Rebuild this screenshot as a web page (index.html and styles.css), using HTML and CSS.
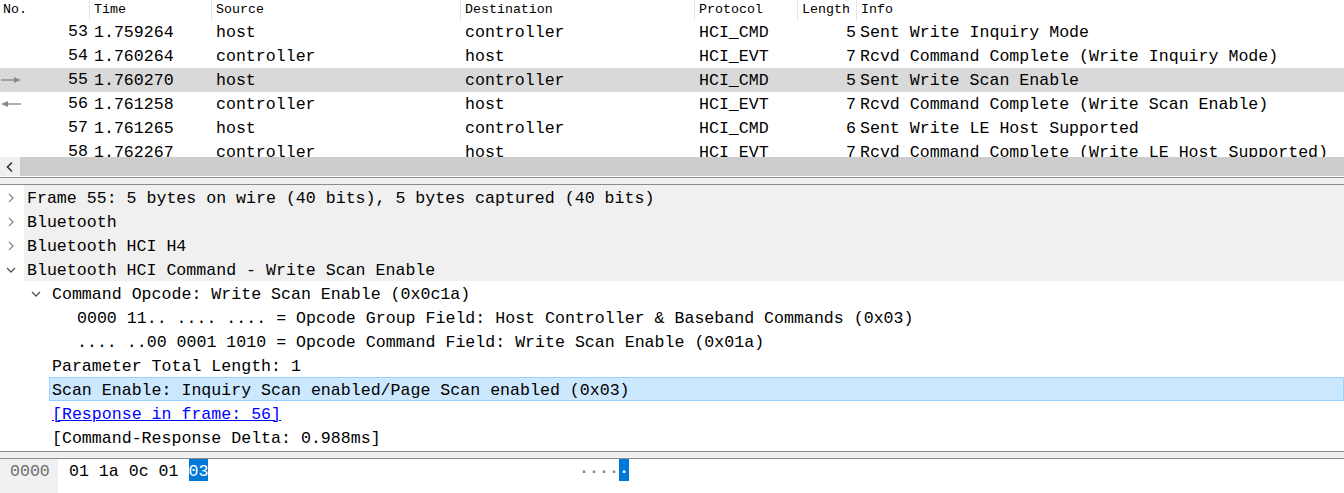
FILE: index.html
```html
<!DOCTYPE html>
<html>
<head>
<meta charset="utf-8">
<link rel="stylesheet" href="styles.css">
</head>
<body>
<div class="app">
  <div class="plist">
    <div class="phead">
      <div class="hc">No.</div>
      <div class="hc">Time</div>
      <div class="hc">Source</div>
      <div class="hc">Destination</div>
      <div class="hc">Protocol</div>
      <div class="hc">Length</div>
      <div class="hc">Info</div>
    </div>
    <div class="prow">
      <div class="c no"><span class="num">53</span></div>
      <div class="c time">1.759264</div>
      <div class="c">host</div>
      <div class="c">controller</div>
      <div class="c">HCI_CMD</div>
      <div class="c len">5</div>
      <div class="c info">Sent Write Inquiry Mode</div>
    </div>
    <div class="prow">
      <div class="c no"><span class="num">54</span></div>
      <div class="c time">1.760264</div>
      <div class="c">controller</div>
      <div class="c">host</div>
      <div class="c">HCI_EVT</div>
      <div class="c len">7</div>
      <div class="c info">Rcvd Command Complete (Write Inquiry Mode)</div>
    </div>
    <div class="prow sel">
      <div class="c no"><svg class="mark" width="22" height="10" viewBox="0 0 22 10"><path d="M1 5H19" stroke="#8a8a8a" stroke-width="1.4"/><path d="M14 2L21 5L14 8Z" fill="#8a8a8a"/></svg><span class="num">55</span></div>
      <div class="c time">1.760270</div>
      <div class="c">host</div>
      <div class="c">controller</div>
      <div class="c">HCI_CMD</div>
      <div class="c len">5</div>
      <div class="c info">Sent Write Scan Enable</div>
    </div>
    <div class="prow">
      <div class="c no"><svg class="mark" width="22" height="10" viewBox="0 0 22 10"><path d="M3 5H21" stroke="#8a8a8a" stroke-width="1.4"/><path d="M8 2L1 5L8 8Z" fill="#8a8a8a"/></svg><span class="num">56</span></div>
      <div class="c time">1.761258</div>
      <div class="c">controller</div>
      <div class="c">host</div>
      <div class="c">HCI_EVT</div>
      <div class="c len">7</div>
      <div class="c info">Rcvd Command Complete (Write Scan Enable)</div>
    </div>
    <div class="prow">
      <div class="c no"><span class="num">57</span></div>
      <div class="c time">1.761265</div>
      <div class="c">host</div>
      <div class="c">controller</div>
      <div class="c">HCI_CMD</div>
      <div class="c len">6</div>
      <div class="c info">Sent Write LE Host Supported</div>
    </div>
    <div class="prow">
      <div class="c no"><span class="num">58</span></div>
      <div class="c time">1.762267</div>
      <div class="c">controller</div>
      <div class="c">host</div>
      <div class="c">HCI_EVT</div>
      <div class="c len">7</div>
      <div class="c info">Rcvd Command Complete (Write LE Host Supported)</div>
    </div>
  </div>
  <div class="hscroll">
    <div class="sbtn"><svg width="10" height="12" viewBox="0 0 10 12"><path d="M7 1.5L2.5 6L7 10.5" fill="none" stroke="#333" stroke-width="1.6"/></svg></div>
    <div class="thumb"></div>
  </div>
  <div class="split"></div>
  <div class="tree">
    <div class="trow l1"><span class="tog"><svg width="10" height="12" viewBox="0 0 10 12"><path d="M3 2L7 6L3 10" fill="none" stroke="#8a8a8a" stroke-width="1.3"/></svg></span><span class="tx">Frame 55: 5 bytes on wire (40 bits), 5 bytes captured (40 bits)</span></div>
    <div class="trow l1"><span class="tog"><svg width="10" height="12" viewBox="0 0 10 12"><path d="M3 2L7 6L3 10" fill="none" stroke="#8a8a8a" stroke-width="1.3"/></svg></span><span class="tx">Bluetooth</span></div>
    <div class="trow l1"><span class="tog"><svg width="10" height="12" viewBox="0 0 10 12"><path d="M3 2L7 6L3 10" fill="none" stroke="#8a8a8a" stroke-width="1.3"/></svg></span><span class="tx">Bluetooth HCI H4</span></div>
    <div class="trow l1"><span class="tog"><svg width="10" height="12" viewBox="0 0 10 12"><path d="M1 4L5 8L9 4" fill="none" stroke="#555" stroke-width="1.3"/></svg></span><span class="tx">Bluetooth HCI Command - Write Scan Enable</span></div>
    <div class="trow l2"><span class="tog2"><svg width="10" height="12" viewBox="0 0 10 12"><path d="M1 4L5 8L9 4" fill="none" stroke="#555" stroke-width="1.3"/></svg></span><span class="tx2">Command Opcode: Write Scan Enable (0x0c1a)</span></div>
    <div class="trow l3">0000 11.. .... .... = Opcode Group Field: Host Controller &amp; Baseband Commands (0x03)</div>
    <div class="trow l3">.... ..00 0001 1010 = Opcode Command Field: Write Scan Enable (0x01a)</div>
    <div class="trow l2b"><span class="tx3">Parameter Total Length: 1</span></div>
    <div class="trow l2b"><span class="tx3 hl">Scan Enable: Inquiry Scan enabled/Page Scan enabled (0x03)</span></div>
    <div class="trow l2b"><span class="tx3 link">[Response in frame: 56]</span></div>
    <div class="trow l2b"><span class="tx3">[Command-Response Delta: 0.988ms]</span></div>
  </div>
  <div class="split split2"></div>
  <div class="bytes">
    <div class="off">0000</div>
    <div class="hex">01 1a 0c 01 <span class="bsel">03</span></div>
    <div class="ascii"><span class="dot">·</span><span class="dot">·</span><span class="dot">·</span><span class="dot">·</span><span class="dot asel">·</span></div>
  </div>
</div>
</body>
</html>
```

FILE: styles.css
```css
* { box-sizing: border-box; }
html, body { margin: 0; padding: 0; background: #fff; }
body {
  width: 1344px;
  height: 493px;
  overflow: hidden;
  font-family: "Liberation Mono", "DejaVu Sans Mono", monospace;
  font-size: 16.6px;
  color: #000;
}
.app { display: flex; flex-direction: column; height: 493px; }

.plist { height: 157px; overflow: hidden; flex: none; }
.phead, .prow {
  display: grid;
  grid-template-columns: 90px 122px 249px 234px 103px 59px 1fr;
}
.phead { height: 20px; }
.hc {
  font-size: 13.3px;
  line-height: 18px;
  padding-top: 1px;
  padding-left: 4px;
  border-right: 1px solid #e5e5e5;
  height: 20px;
  white-space: nowrap;
}
.hc:first-child { padding-left: 3px; }
.hc:last-child { border-right: none; }
.prow { height: 24px; white-space: nowrap; }
.prow.sel { background: #d9d9d9; }
.c { padding-left: 4px; padding-top: 2px; line-height: 22px; overflow: hidden; }
.c.no { display: flex; align-items: center; padding-left: 0; padding-right: 2px; padding-top: 0; }
.c.no .num { margin-left: auto; line-height: 26px; }
.mark { display: block; }
.c.len { text-align: right; padding-right: 1px; }
.c.info { padding-left: 3px; overflow: visible; }

.hscroll { display: flex; height: 19px; flex: none; }
.sbtn { width: 20px; background: #f0f0f0; display: flex; align-items: center; justify-content: center; }
.sbtn svg { display: block; }
.thumb { flex: 1; background: #cdcdcd; }

.split {
  height: 9px;
  flex: none;
  background: #fff;
  border-bottom: 1px solid #8c8c8c;
}
.split::before {
  content: "";
  display: block;
  margin-top: 1px;
  height: 6px;
  border-top: 1px solid #8c8c8c;
  background: #f0f0f0;
}
.split.split2 { height: 8px; border-top: 1px solid #8c8c8c; border-bottom: 1px solid #8c8c8c; background: #f0f0f0; }
.split.split2::before { display: none; }

.tree { flex: none; height: 266px; overflow: hidden; }
.trow { height: 24px; display: flex; white-space: nowrap; }
.trow.l3 { padding-top: 4px; line-height: 20px; }
.tog { width: 24px; display: flex; align-items: center; padding-left: 6px; padding-top: 1px; flex: none; }
.tog svg, .tog2 svg { display: block; }
.tx { flex: 1; background: #f0f0f0; padding-left: 3px; padding-top: 4px; line-height: 20px; }
.tog2 { width: 49px; display: flex; align-items: center; padding-left: 31px; padding-top: 1px; flex: none; }
.tx2 { padding-left: 3px; padding-top: 4px; line-height: 20px; }
.l3 { padding-left: 77px; }
.l2b { padding-left: 49px; }
.tx3 { padding-left: 3px; flex: 1; padding-top: 4px; line-height: 20px; }
.tx3.hl { background: #cce8ff; border: 1px solid #99d1ff; padding-left: 2px; padding-top: 3px; line-height: 19px; }
.tx3.link { color: #0000ff; text-decoration: underline; flex: none; align-self: flex-start; height: 24px; }

.bytes { flex: 1; display: flex; line-height: 26px; }
.off { width: 58px; background: #f0f0f0; color: #6e6e6e; padding-left: 10px; flex: none; }
.hex { width: 521px; padding-left: 11px; white-space: pre; flex: none; height: 22px; }
.bsel { background: #0078d7; color: #fff; display: inline-block; height: 22px; vertical-align: top; overflow: hidden; }
.ascii { display: flex; height: 22px; }
.dot { width: 10px; height: 22px; overflow: hidden; text-align: center; color: #8a8a8a; font-weight: bold; }
.dot.asel { background: #0078d7; color: #fff; }
```
